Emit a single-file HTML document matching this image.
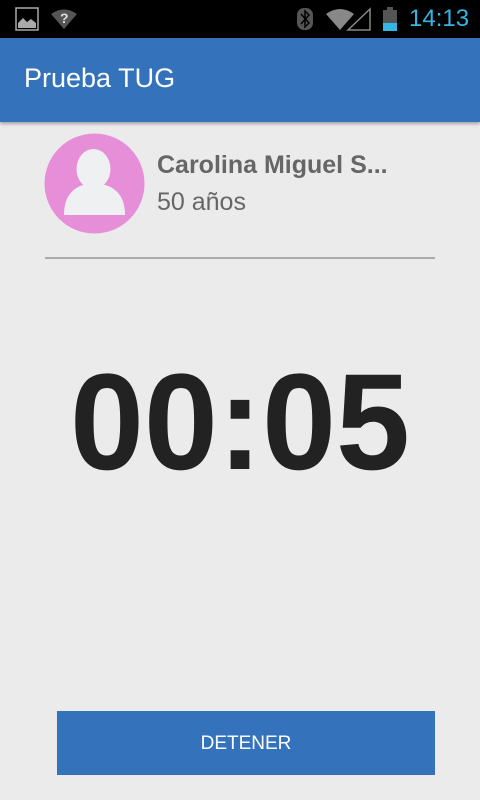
<!DOCTYPE html>
<html><head><meta charset="utf-8"><style>
body{margin:0;width:480px;height:800px;background:#ebebeb;font-family:"Liberation Sans",sans-serif;position:relative;overflow:hidden}
.sb{position:absolute;top:0;left:0;width:480px;height:38px;background:#000}
.ab{position:absolute;top:38px;left:0;width:480px;height:84px;background:#3473bb;box-shadow:0 2px 3px rgba(0,0,0,.3)}
.ab span{position:absolute;left:24px;top:25px;color:#fff;font-size:27px}
.abs{position:absolute}
</style></head><body>
<div class="sb">
<svg class="abs" style="left:15px;top:7px" width="24" height="24"><rect x="1" y="1" width="22" height="22" fill="none" stroke="#aaa" stroke-width="1.5"/><path d="M3 21 L3 16 L8 11 L12 15 L16 12 L21 16 L21 21Z" fill="#aaa"/></svg>
<svg class="abs" style="left:50px;top:8px" width="28" height="22"><path d="M1 6 Q14 -3 27 6 L14 21Z" fill="#555"/><text x="10" y="15" font-size="14" font-weight="bold" fill="#ddd" font-family="Liberation Sans">?</text></svg>
<svg class="abs" style="left:296px;top:7px" width="18" height="24"><rect x="1" y="1" width="16" height="22" rx="7" fill="#555"/><path d="M5 7 L13 16 L9 20 L9 4 L13 8 L5 17" fill="none" stroke="#000" stroke-width="1.5"/></svg>
<svg class="abs" style="left:325px;top:7px" width="50" height="24"><path d="M1 7 Q15 -3 29 7 L15 23Z" fill="#888"/><path d="M45 2 L45 23 L23 23Z" fill="none" stroke="#888" stroke-width="1.5"/></svg>
<svg class="abs" style="left:383px;top:7px" width="14" height="24"><rect x="4" y="0" width="6" height="3" fill="#555"/><rect x="0" y="3" width="14" height="21" fill="#555"/><rect x="0" y="16" width="14" height="8" fill="#33b5e5"/></svg>
<div class="abs" style="left:409px;top:5px;color:#33b5e5;font-size:24px">14:13</div>
</div>
<div class="ab"><span>Prueba TUG</span></div>
<svg class="abs" style="left:44px;top:133px" width="102" height="102"><circle cx="50.5" cy="50.5" r="50" fill="#e78ed9"/><ellipse cx="49.5" cy="36" rx="17" ry="20" fill="#eef0f2"/><path d="M20 82 Q20 52 50 50 Q81 52 81 82 Z" fill="#eef0f2"/></svg>
<div class="abs" style="left:157px;top:151px;font-size:25px;font-weight:bold;color:#666">Carolina Miguel S...</div>
<div class="abs" style="left:157px;top:188px;font-size:25px;color:#666">50 años</div>
<div class="abs" style="left:45px;top:257px;width:390px;height:2px;background:#aaa"></div>
<div class="abs" style="left:0;top:343px;width:480px;text-align:center;font-size:137px;font-weight:bold;color:#222;line-height:160px;transform:scaleX(0.97)">00:05</div>
<div class="abs" style="left:57px;top:711px;width:378px;height:64px;background:#3473bb;color:#fff;font-size:19px;text-align:center;line-height:66px">DETENER</div>
</body></html>
